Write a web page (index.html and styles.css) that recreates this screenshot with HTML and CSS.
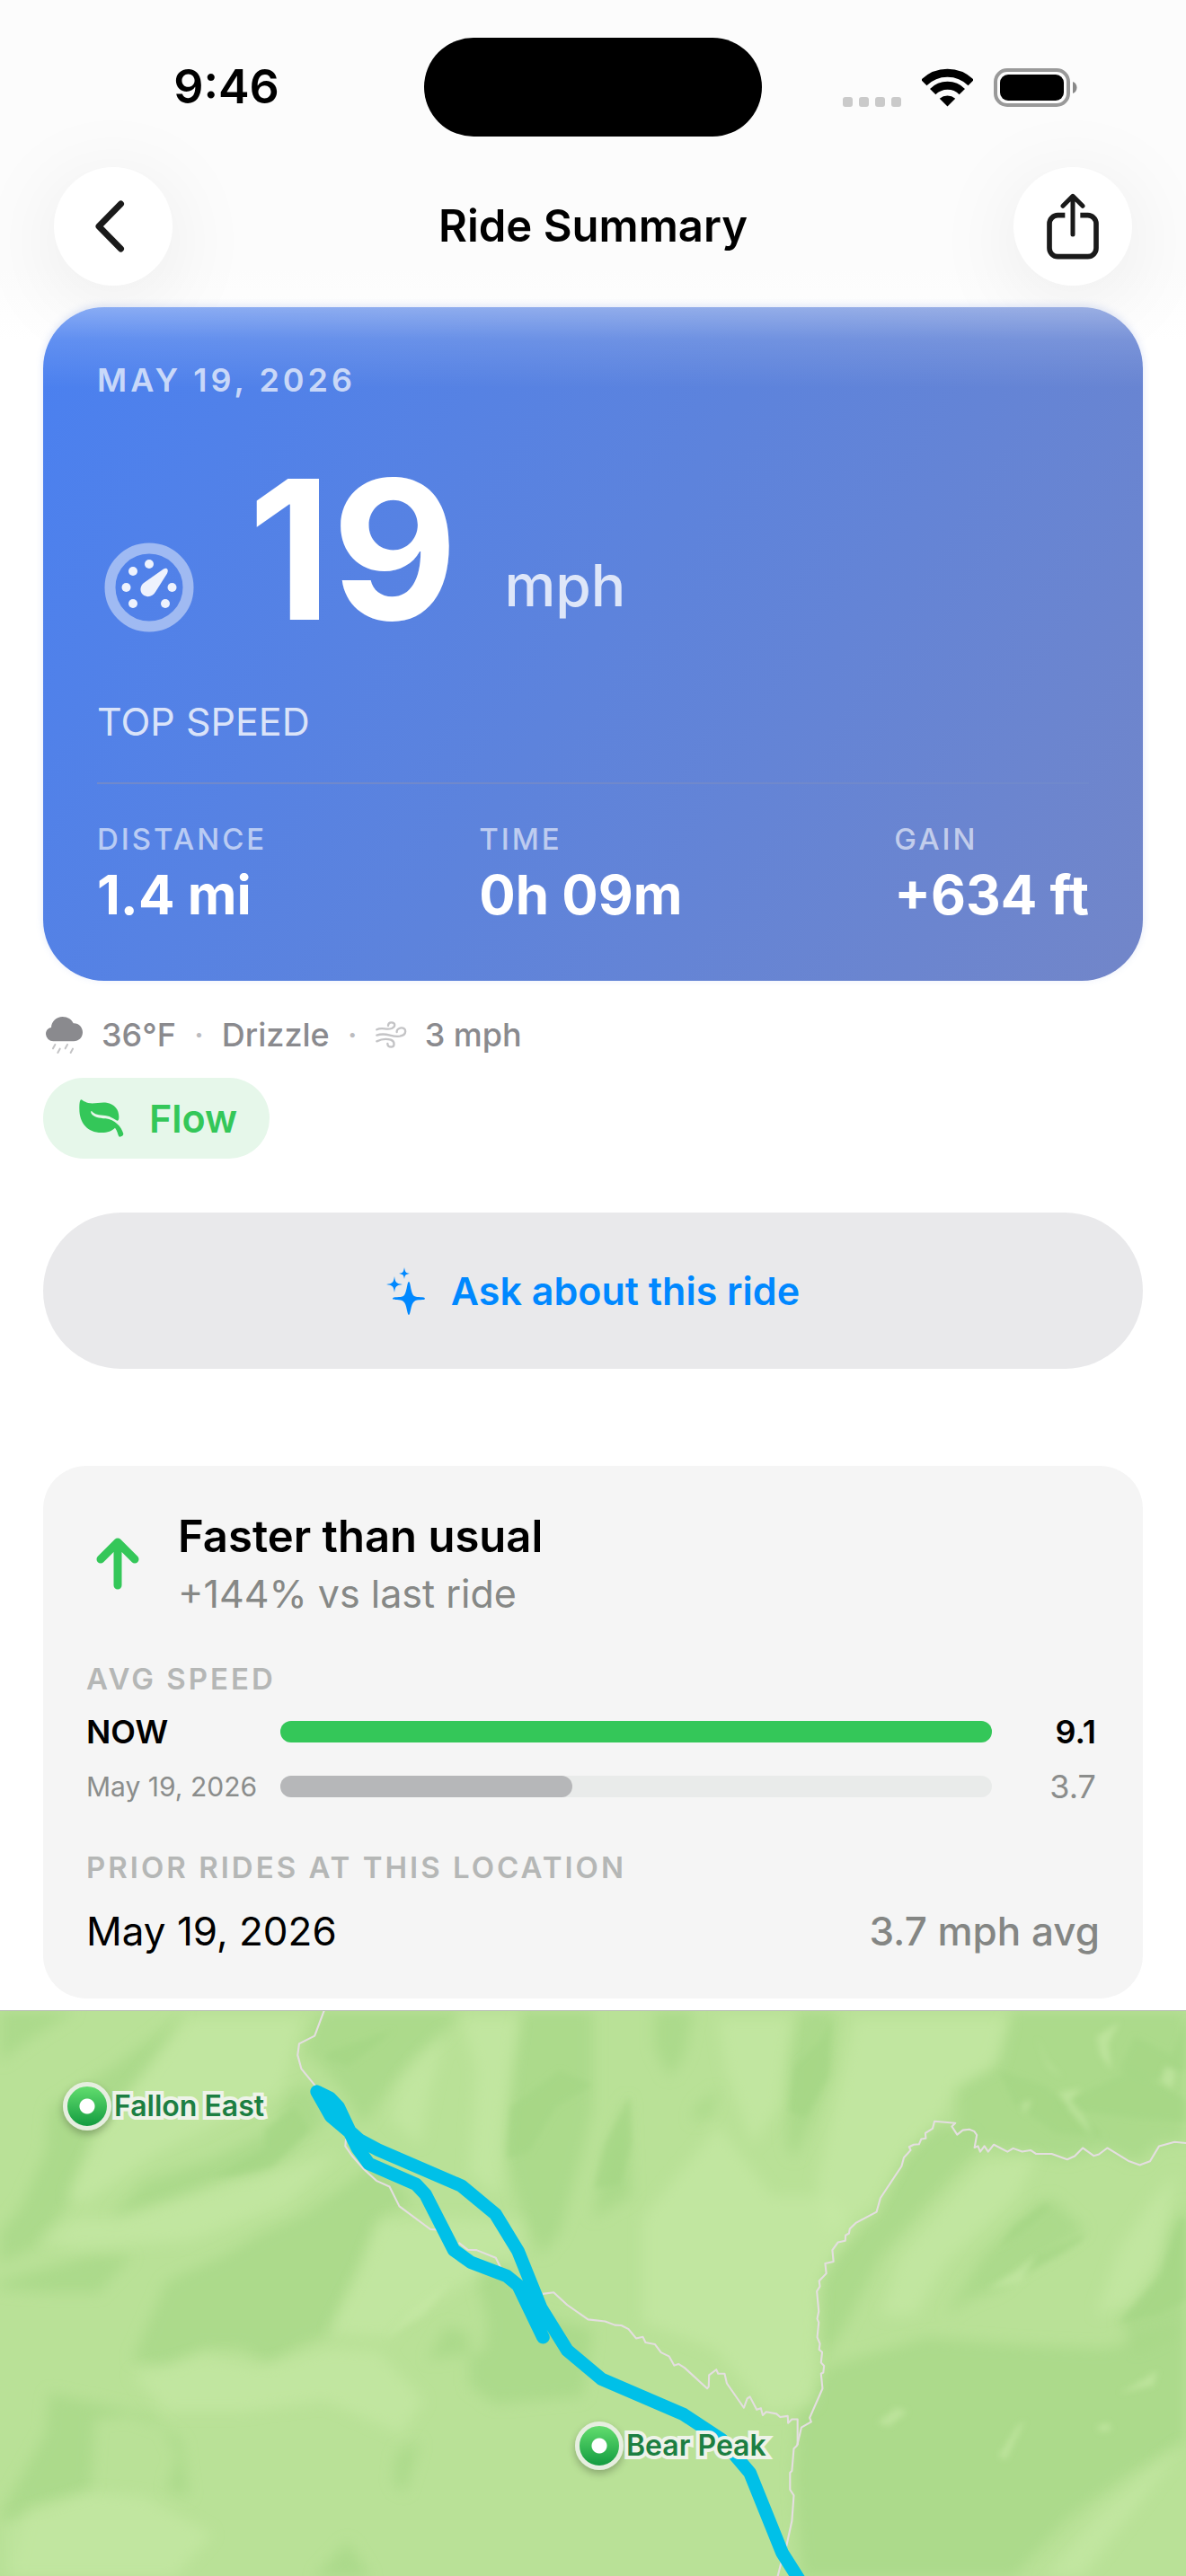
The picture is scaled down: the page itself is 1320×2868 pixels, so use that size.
FILE: index.html
```html
<!DOCTYPE html>
<html lang="en">
<head>
<meta charset="utf-8">
<meta name="viewport" content="width=device-width, initial-scale=1">
<title>Ride Summary</title>
<link rel="stylesheet" href="styles.css">
</head>
<body>
<div class="screen">
  <div class="status-bar">
    <span class="status-time">9:46</span>
    <span class="island"></span>
    <div class="status-icons">
      <div class="signal"><i></i><i></i><i></i><i></i></div>
      <svg class="wifi" viewBox="314 74 173 128" aria-hidden="true">
        <path class="wifi-arc" d="M321 121.500A112.500 112.500 0 0 1 480 121.500M351 152A70 70 0 0 1 450 152"/>
        <path d="M400.500 202L374 175A42 42 0 0 1 427 175Z"/>
      </svg>
      <svg class="battery" viewBox="0 0 93 43" aria-hidden="true">
        <rect class="battery-shell" x="2" y="2" width="81" height="39" rx="13"/>
        <rect x="7" y="7" width="71" height="29" rx="9"/>
        <path class="battery-cap" d="M88 15c6 2 6 11 0 13z"/>
      </svg>
    </div>
  </div>

  <header class="nav">
    <button class="round-button" type="button" aria-label="Back">
      <svg class="chevron" viewBox="0 0 34 58" aria-hidden="true"><path d="M29.500 4L5 29L29.500 54"/></svg>
    </button>
    <h1 class="nav-title">Ride Summary</h1>
    <button class="round-button" type="button" aria-label="Share">
      <svg class="share" viewBox="728 490 180 225" aria-hidden="true">
        <path class="share-box" d="M792 564H768a28 28 0 0 0-28 28v82a28 28 0 0 0 28 28h100a28 28 0 0 0 28-28v-82a28 28 0 0 0-28-28H843"/>
        <path class="share-arrow" d="M818 628V501M785 533L818 500L851 533"/>
      </svg>
    </button>
  </header>

  <main class="content">
    <section class="hero">
      <p class="hero-date">MAY 19, 2026</p>
      <div class="hero-speed">
        <svg class="gauge" viewBox="0 0 100 100" aria-hidden="true">
          <circle class="gauge-ring" cx="50" cy="50" r="43.500"/>
          <g class="gauge-marks">
            <circle cx="50" cy="24" r="5"/><circle cx="32" cy="32" r="5"/><circle cx="24.500" cy="50" r="5"/>
            <circle cx="32" cy="68" r="5"/><circle cx="68" cy="68" r="5"/><circle cx="75.500" cy="50" r="5"/>
            <path d="M66 29.500c4-2 6 1 4 5L57 55c-3 5-9 7-14 3-4-4-3-10 1-13z"/>
          </g>
        </svg>
        <span class="hero-value">19</span>
        <span class="hero-unit">mph</span>
      </div>
      <p class="hero-caption">TOP SPEED</p>
      <dl class="stats">
        <div><dt>DISTANCE</dt><dd>1.4 mi</dd></div>
        <div><dt>TIME</dt><dd>0h 09m</dd></div>
        <div><dt>GAIN</dt><dd>+634 ft</dd></div>
      </dl>
    </section>

    <div class="weather">
      <svg class="cloud" viewBox="30 32 129 129" aria-hidden="true">
        <path class="cloud-body" d="M58 117a25 25 0 0 1-25-24c0-13 8-20 18-22C52 50 68 35 89 35c17 0 30 9 36 22 18-1 31 13 31 30s-13 30-30 30z"/>
        <path class="cloud-rain" d="M64 128l-7 13M80 142l-7 13M105 128l-7 13M123 142l-7 13"/>
      </svg>
      <span>36°F</span>
      <span class="dot">·</span>
      <span>Drizzle</span>
      <span class="dot">·</span>
      <svg class="wind" viewBox="44 52 105 90" aria-hidden="true">
        <path d="M48 80C65 71 80 82 98 76C112 70 110 56 97 56C90 56 86 61 86 67M48 99C80 87 95 106 125 102C150 98 148 73 129 74C120 75 114 82 115 88M48 119C66 110 82 110 95 114C110 120 108 138 96 138C88 138 84 133 84 127"/>
      </svg>
      <span>3 mph</span>
    </div>

    <div class="tag">
      <svg class="leaf" viewBox="143 313 150 126" aria-hidden="true">
        <path d="M150 314C156 316 162 324 180 326C200 327 215 322 235 324C262 328 276 348 276 370C276 380 275 384 270 384C260 380 252 370 230 367C210 365 194 364 185 352C182 351 182 356 184 360C192 373 210 375 232 377C262 380 284 404 291 428C291 436 280 440 276 437C272 430 270 415 263 408C252 418 240 424 218 424C170 424 144 390 144 345C144 330 145 314 150 314Z"/>
      </svg>
      <span>Flow</span>
    </div>

    <button class="ask" type="button">
      <svg class="sparkles" viewBox="430 1411 44 53" aria-hidden="true">
        <path d="M455 1427C457 1427 457 1440 461 1443C464 1445 473 1443 473 1446C473 1448 464 1446 461 1449C457 1452 457 1464 455 1464C453 1464 453 1452 449 1449C446 1446 437 1448 437 1446C437 1443 446 1445 449 1443C453 1440 453 1427 455 1427Z"/>
        <path d="M439 1421C440 1428 441 1429 448 1430C441 1431 440 1432 439 1439C438 1432 437 1431 430 1430C437 1429 438 1428 439 1421Z"/>
        <path d="M450 1411C451 1416 451 1417 456 1418C451 1419 451 1419 450 1424C449 1419 449 1419 444 1418C449 1417 449 1416 450 1411Z"/>
      </svg>
      <span>Ask about this ride</span>
    </button>

    <section class="compare">
      <div class="compare-head">
        <svg class="arrow-up" viewBox="0 0 48 58" aria-hidden="true"><path d="M24 53V6M5 24L24 5L43 24"/></svg>
        <div>
          <h2>Faster than usual</h2>
          <p>+144% vs last ride</p>
        </div>
      </div>
      <h3>AVG SPEED</h3>
      <div class="bars">
        <div class="bar-row bar-now">
          <span class="bar-label">NOW</span>
          <span class="bar-track"><span class="bar-fill" style="width: 100%"></span></span>
          <span class="bar-value">9.1</span>
        </div>
        <div class="bar-row">
          <span class="bar-label">May 19, 2026</span>
          <span class="bar-track"><span class="bar-fill" style="width: 41%"></span></span>
          <span class="bar-value">3.7</span>
        </div>
      </div>
      <h3>PRIOR RIDES AT THIS LOCATION</h3>
      <div class="prior">
        <span>May 19, 2026</span>
        <span class="prior-speed">3.7 mph avg</span>
      </div>
    </section>
  </main>

  <section class="map" aria-label="Route map">
    <svg class="map-art" viewBox="0 0 1320 631" preserveAspectRatio="xMinYMin slice" aria-hidden="true">
      <defs>
        <filter id="soft" x="-10%" y="-10%" width="120%" height="120%"><feGaussianBlur stdDeviation="18"/></filter>
        <filter id="fine" x="-10%" y="-10%" width="120%" height="120%"><feGaussianBlur stdDeviation="8"/></filter>
      </defs>
      <g transform="translate(0 -17) scale(.4209 .4133)">
        <g class="dark" filter="url(#soft)">
          <path d="M0 40H200L60 130L0 180Z"/>
          <path d="M490 40L430 140L390 200L320 300L250 360L180 560L90 680L0 720V640L60 560L120 420L130 300L300 190L420 100Z"/>
          <path d="M850 40H1220L1170 110L1090 170L1020 260L960 350L900 250L840 180L800 150Z"/>
          <path d="M860 340L760 430L690 480L600 490L480 540L400 570L290 600L380 500L560 440L720 360L760 260L830 240Z"/>
          <path d="M1380 40H1568V300L1540 420L1480 640L1430 700L1370 560L1330 400L1350 200Z"/>
          <path d="M1000 440L900 520L800 590L690 640L590 700L440 770L350 980L440 1000L540 950L640 950L710 990L800 940L870 910L960 700L1010 590L1090 560Z"/>
          <path d="M350 700L260 800L130 800L0 790V770L240 700Z"/>
          <path d="M130 1070L120 1180L10 1380L0 1400V1568H30L70 1380L240 1330L250 1140L340 1130L430 1160L470 1240L440 1330L500 1350L480 1200L400 1130Z"/>
          <path d="M1180 890L1240 910L1240 1050L1310 1100L1540 1080L1568 900L1420 860L1300 680L1260 760L1290 880L1280 960L1130 980Z"/>
          <path d="M1110 1200L1050 1230L1040 1310L1070 1340Z"/>
          <path d="M1568 600L1670 540L1660 270L1600 420Z"/>
          <path d="M1730 40H1835L1810 160L1770 220L1730 140Z"/>
          <path d="M2115 40H2210L2200 200L2150 330L2100 440L2080 400L2085 180Z"/>
          <path d="M1900 250L1840 300L1830 340L1880 320Z"/>
          <path d="M2680 40H3136V390L3060 400L3010 450L2920 410L2820 440L2640 410L2580 400L2530 360L2530 240L2620 190L2650 90Z"/>
          <path d="M2470 340L2570 370L2590 420L2560 440L2450 560L2330 700L2230 900L2170 990L2160 800L2200 700L2320 590L2390 440Z"/>
          <path d="M2870 630L2800 680L2700 740L2640 790L2560 820L2500 860L2600 700L2740 560L2780 545Z"/>
          <path d="M3136 560L3080 640L3060 760L2960 870L3000 960L3136 900Z"/>
          <path d="M2110 1130L2190 1000L2450 920L2700 940L2920 950L3136 890V1200L2980 1290L2820 1410L2680 1568H2120L2100 1300Z"/>
          <path d="M920 1470L830 1568H980Z"/>
        </g>
        <g class="light" filter="url(#soft)">
          <path d="M500 60L800 60L740 260L420 420L220 560L180 540L280 340Z"/>
          <path d="M1220 60H1370L1340 300L1320 540L1240 480L1260 200Z"/>
          <path d="M1180 90L1060 230L1030 330L1110 400L1140 240Z"/>
          <path d="M320 600L700 480L900 420L760 560L500 660L200 680L110 660L200 600Z"/>
          <path d="M870 910L960 730L1000 610L1180 600L1380 610L1370 700L1250 760L1060 880L1030 920Z"/>
          <path d="M350 1020L540 970L690 1000L870 950L1000 960L1120 1090L1060 1180L860 1090L640 1120L440 1120Z"/>
          <path d="M1900 350L2040 540L2200 540L2260 620L2170 760L2150 1100L2030 1120L1890 950L1700 880L1700 600Z"/>
          <path d="M2260 60H2670L2640 180L2520 250L2480 340L2390 420L2310 570L2180 640L2160 500L2230 200Z"/>
          <path d="M1900 60H2090L2060 300L1990 400L1920 200Z"/>
          <path d="M2740 430L2690 540L2500 720L2420 860L2330 860L2380 700L2500 560L2600 450Z"/>
          <path d="M3110 480L3070 700L2990 830L2900 860L2960 680L3040 560Z"/>
          <path d="M0 1420L240 1340L380 1350L560 1450L460 1568H0Z"/>
          <path d="M3136 1200L3010 1370L2860 1568H2760L2900 1400Z"/>
        </g>
        <g class="dark" filter="url(#fine)">
          <path d="M870 150L1040 90L1000 130L920 190L860 170Z"/>
          <path d="M700 360L780 300L820 360L720 460L620 485L560 490L700 410Z"/>
          <path d="M2100 190L2170 120L2200 60L2190 220L2130 330L2085 310Z"/>
          <path d="M2760 560L2680 620L2640 680L2700 640L2780 570Z"/>
          <path d="M2870 640L2740 700L2690 760L2800 700L2860 660Z"/>
          <path d="M3120 600L3070 750L2960 880L3060 860L3136 820V600Z"/>
          <path d="M1665 270L1600 400L1570 520L1640 510L1670 400Z"/>
          <path d="M1350 300L1480 200L1568 240L1470 300L1400 420L1340 440Z"/>
          <path d="M3000 110L3100 160L3136 60V200L3040 230L2960 200Z"/>
          <path d="M2640 200L2760 240L2860 320L2920 380L2790 370L2680 290Z"/>
          <path d="M2790 300L2990 200L3136 280V340L3000 330Z"/>
        </g>
        <g class="light" filter="url(#fine)">
          <path d="M2740 110L2770 180L2810 220L2770 190Z"/>
          <path d="M2900 110L2960 70L2930 130L2940 200L2910 160Z"/>
          <path d="M2800 260L2860 250L2830 280L2870 330L2890 380L2830 310Z"/>
          <path d="M3080 190L3110 200L3100 250L3070 230Z"/>
          <path d="M2700 290L2730 280L2710 320Z"/>
          <path d="M2320 1150L2370 1110L2400 1120L2350 1160Z"/>
          <path d="M2980 1060L3060 1010L3050 1050L2960 1070Z"/>
          <path d="M2640 1240L2690 1160L2710 1145L2660 1250Z"/>
          <path d="M2900 1160L2930 1150L2940 1170L2910 1175Z"/>
          <path d="M2610 790L2690 740L2740 700L2700 770Z"/>
          <path d="M1020 920L1080 850L1190 770L1120 860Z"/>
        </g>
        <g class="trail">
          <path d="M857 40L832 108L791 129L787 160L797 197L835 244M915 385L913 405L930 430L960 465L995 498L1030 514L1056 567L1138 629L1155 630M1213 665L1237 684L1260 685L1311 706L1325 735M1435 803L1464 799L1500 833L1555 872L1600 877L1626 887L1643 888L1662 898L1682 923L1700 919L1707 934L1732 939L1748 961L1769 971L1783 996L1794 992L1810 1002L1870 1058L1874 1053L1875 1022L1894 1007L1899 1018L1916 1018L1922 1044L1967 1110L1976 1085L1983 1080L2001 1115L2012 1111L2017 1130L2026 1121L2053 1126L2063 1135L2083 1132L2084 1151L2094 1141L2109 1141V1210"/>
          <path transform="translate(1568 0)" d="M1570 397L1538 394L1497 405L1473 446L1446 456L1418 446L1360 410L1338 427L1324 431L1295 410L1274 432L1254 441L1213 426L1172 426L1157 416L1135 420L1111 411L1096 420L1060 401L1045 420L1035 405L1024 420L1018 405L1009 409L1015 375L1008 365L995 360L978 362L963 374L949 352L958 343L903 338L898 358L879 370L880 384L868 386L862 400L848 401L836 407L840 416L822 436L816 459L760 545L750 582L695 612L679 628L677 640L668 645L667 660L648 664L633 685L636 716L614 721L617 748L598 768L600 783L592 796L597 850L593 870L597 880L593 920L600 937L598 953L606 960L603 988L611 997L609 1015L603 1018L607 1058L573 1137L577 1148L551 1163L540 1211L531 1220L526 1280L521 1285V1330L531 1346L526 1415L512 1480L497 1530L487 1570"/>
        </g>
        <path class="route" d="M838 258L872 275L895 300L925 365L950 388L1000 415L1220 512L1310 588L1370 688L1430 840L1500 955L1590 1032L1808 1128L1908 1195L1983 1285L2068 1500L2130 1600M838 258L875 325L925 368L945 410L975 452L1100 508L1125 535L1200 685L1245 718L1340 755L1370 780L1436 920"/>
      </g>
    </svg>
    <div class="pin pin-fallon"><span class="pin-mark"></span><span class="pin-name">Fallon East</span></div>
    <div class="pin pin-bear"><span class="pin-mark"></span><span class="pin-name">Bear Peak</span></div>
  </section>
</div>
</body>
</html>
```
FILE: styles.css
```css
* { box-sizing: border-box; }

body {
  margin: 0;
  background: #fff;
  color: #000;
  font-family: Inter, "Liberation Sans", sans-serif;
}

h1, h2, h3, p, dl, dd { margin: 0; }
button { border: 0; font: inherit; }
svg { display: block; flex: none; }

.screen {
  display: flex;
  flex-direction: column;
  min-height: 100vh;
  background: linear-gradient(#fcfcfc 0, #fcfcfc 300px, #fff 380px);
}

/* Status bar */
.status-bar {
  display: grid;
  grid-template-columns: 1fr auto 1fr;
  align-items: center;
  padding: 42px 0 34px;
}
.status-time {
  padding-left: 32px;
  text-align: center;
  font-size: 52px;
  line-height: 60px;
  font-weight: 600;
}
.island { width: 376px; height: 110px; border-radius: 55px; background: #000; }
.status-icons {
  display: flex;
  justify-content: center;
  align-items: flex-end;
  gap: 23px;
  padding-right: 32px;
}
.signal { display: flex; gap: 7px; }
.signal i { width: 11px; height: 11px; border-radius: 3px; background: #cacaca; }
.wifi { width: 57px; height: 43px; }
.wifi-arc { fill: none; stroke: #000; stroke-width: 27; }
.battery { width: 93px; height: 43px; }
.battery-shell { fill: none; stroke: #999; stroke-width: 4; }
.battery-cap { fill: #888; }

/* Navigation */
.nav {
  display: flex;
  justify-content: space-between;
  align-items: center;
  padding: 0 60px;
}
.round-button {
  display: grid;
  place-items: center;
  width: 132px;
  height: 132px;
  padding: 0;
  border-radius: 50%;
  background: #fff;
  box-shadow: 0 16px 100px rgba(0, 0, 0, 0.08);
}
.round-button path { fill: none; stroke: #1a1a1a; stroke-linecap: round; stroke-linejoin: round; }
.chevron { width: 34px; height: 58px; margin-right: 8px; }
.chevron path { stroke-width: 7; }
.share { width: 60px; height: 75px; }
.round-button .share-box { stroke-width: 17; stroke-linecap: butt; }
.round-button .share-arrow { stroke-width: 15; }
.nav-title { font-size: 49px; line-height: 60px; font-weight: 600; }

/* Ride content */
.content {
  display: flex;
  flex-direction: column;
  align-items: stretch;
  padding: 24px 48px 13px;
}

.hero {
  padding: 60px;
  border-radius: 68px;
  color: #fff;
  background:
    linear-gradient(rgba(255, 255, 255, 0.34), rgba(255, 255, 255, 0.12) 36px, rgba(255, 255, 255, 0) 90px),
    linear-gradient(121deg, #4a80f0, #5d83dc 50%, #7286c9);
  box-shadow: 0 -2px 8px rgba(93, 131, 220, 0.2);
}
.hero-date {
  font-size: 36px;
  line-height: 42px;
  font-weight: 600;
  letter-spacing: 4px;
  color: rgba(255, 255, 255, 0.7);
}
.hero-speed {
  display: flex;
  align-items: flex-end;
  margin-top: 60px;
  padding-left: 8px;
}
.gauge { width: 100px; height: 100px; margin-bottom: 16px; }
.gauge-ring { fill: none; stroke: rgba(255, 255, 255, 0.45); stroke-width: 12; }
.gauge-marks { fill: #eef2fd; }
.hero-value {
  padding-left: 60px;
  font-size: 216px;
  line-height: 216px;
  font-weight: 700;
}
.hero-unit {
  margin: 0 0 28px 52px;
  font-size: 64px;
  line-height: 80px;
  font-weight: 500;
  color: rgba(255, 255, 255, 0.8);
}
.hero-caption {
  margin-top: 56px;
  font-size: 43px;
  line-height: 54px;
  color: rgba(255, 255, 255, 0.8);
}
.stats {
  display: flex;
  justify-content: space-between;
  margin-top: 41px;
  padding-top: 41px;
  border-top: 2px solid #7089cc;
}
.stats dt {
  font-size: 33px;
  line-height: 40px;
  font-weight: 500;
  letter-spacing: 3px;
  color: rgba(255, 255, 255, 0.6);
}
.stats dd {
  margin-top: 6px;
  font-size: 60px;
  line-height: 72px;
  font-weight: 700;
}

.weather {
  display: flex;
  align-items: center;
  gap: 20px;
  margin-top: 38px;
  padding-left: 2px;
  font-size: 36px;
  line-height: 44px;
  font-weight: 500;
  color: #8a8a8e;
}
.cloud { width: 43px; height: 43px; }
.cloud-body { fill: #8a8a8e; }
.cloud-rain { stroke: #c4c4c6; stroke-width: 6; stroke-linecap: round; }
.wind { width: 35px; height: 30px; }
.wind path { fill: none; stroke: #c4c4c6; stroke-width: 7; stroke-linecap: round; }
.dot { color: #bcbcbf; }

.tag {
  display: flex;
  align-items: center;
  align-self: flex-start;
  gap: 28px;
  margin-top: 26px;
  padding: 18px 36px 18px 40px;
  border-radius: 45px;
  background: #e6f7ea;
  color: #34c759;
  font-size: 43px;
  line-height: 54px;
  font-weight: 600;
}
.leaf { width: 50px; height: 42px; fill: currentColor; }

.ask {
  display: flex;
  justify-content: center;
  align-items: center;
  gap: 28px;
  margin-top: 60px;
  padding: 60px;
  border-radius: 87px;
  background: #e9e9eb;
  color: #0088ff;
  font-size: 43px;
  line-height: 54px;
  font-weight: 600;
}
.sparkles { width: 44px; height: 53px; fill: currentColor; }

/* Comparison card */
.compare {
  margin-top: 108px;
  padding: 48px;
  border-radius: 48px;
  background: #f5f5f5;
}
.compare-head {
  display: flex;
  align-items: center;
  gap: 43px;
  padding-left: 11px;
}
.arrow-up { width: 48px; height: 58px; }
.arrow-up path { fill: none; stroke: #34c759; stroke-width: 9; stroke-linecap: round; stroke-linejoin: round; }
.compare h2 { font-size: 49px; line-height: 62px; font-weight: 600; }
.compare-head p { margin-top: 5px; font-size: 43px; line-height: 54px; color: #868886; }
.compare h3 {
  margin-top: 48px;
  font-size: 33px;
  line-height: 40px;
  font-weight: 600;
  letter-spacing: 3px;
  color: #b5b7b6;
}
.bars { display: grid; gap: 17px; margin-top: 17px; }
.bar-row {
  display: grid;
  grid-template-columns: 192px 1fr 96px;
  align-items: center;
  column-gap: 24px;
  line-height: 44px;
  font-size: 36px;
  color: #8b8d8c;
}
.bar-label { font-size: 30px; white-space: nowrap; }
.bar-value { padding-right: 4px; text-align: right; }
.bar-track { height: 24px; border-radius: 12px; background: #e9ebea; }
.bar-fill { display: block; height: 100%; border-radius: 12px; background: #b6b7b9; }
.bar-now { font-weight: 600; color: #000; }
.bar-now .bar-label { font-size: 36px; }
.bar-now .bar-fill { background: #34c759; }
.prior {
  display: flex;
  justify-content: space-between;
  margin-top: 24px;
  font-size: 44px;
  line-height: 54px;
}
.prior-speed { font-weight: 500; color: #848684; }

/* Map */
.map {
  position: relative;
  flex: 1;
  min-height: 600px;
  overflow: hidden;
  border-top: 1px solid #b9beb6;
  background: #b7e095;
}
.map-art { position: absolute; width: 100%; height: 100%; background: #b9e197; }
.dark { fill: #a3d583; fill-opacity: 0.6; }
.light { fill: #c6e9a5; fill-opacity: 0.6; }
.trail { fill: none; stroke: #e4dee0; stroke-width: 5; stroke-linejoin: round; }
.route { fill: none; stroke: #00c0e8; stroke-width: 35; stroke-linecap: round; stroke-linejoin: round; }
.pin { position: absolute; display: flex; align-items: center; gap: 3px; }
.pin-fallon { left: 70px; top: 79px; }
.pin-bear { left: 640px; top: 457px; }
.pin-mark {
  width: 54px;
  height: 54px;
  border: 5px solid #e6eee0;
  border-radius: 50%;
  background: radial-gradient(circle, #fff 8px, transparent 9px), linear-gradient(#62dd6e, #139c40);
  box-shadow: 0 4px 8px rgba(0, 0, 0, 0.25);
}
.pin-name {
  font-size: 32px;
  line-height: 40px;
  font-weight: 600;
  color: #1c7f42;
  -webkit-text-stroke: 8px #eef3e9;
  paint-order: stroke fill;
}
```
